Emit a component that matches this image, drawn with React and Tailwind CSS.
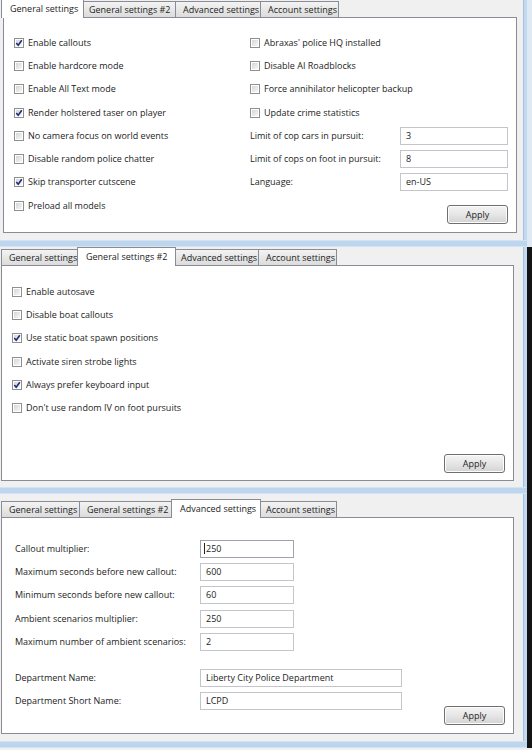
import React from "react";

const TABS = [
  { label: "General settings", w: "w-[79px]", wActive: "w-[83px]" },
  { label: "General settings #2", w: "w-[95px]", wActive: "w-[99px]" },
  { label: "Advanced settings", w: "w-[86px]", wActive: "w-[90px]" },
  { label: "Account settings", w: "w-[79px]", wActive: "w-[83px]" },
];

const TabStrip = ({ active }) => (
  <div className="flex items-end h-[17px]">
    {TABS.map((tab, i) => {
      const first = i === 0;
      if (i === active) {
        return (
          <div
            key={tab.label}
            className={`relative z-10 h-[19px] -mb-px bg-white border-x border-t border-[#898c95] flex items-center pl-[8px] overflow-hidden whitespace-nowrap ${tab.wActive} ${
              first ? "ml-[-2px]" : "ml-[-3px]"
            } mr-[-2px]`}
          >
            {tab.label}
          </div>
        );
      }
      return (
        <div
          key={tab.label}
          className={`h-[16px] bg-linear-to-b from-[#f3f3f3] to-[#dcdcdc] border-x border-t border-[#898c95] flex items-center pl-[7px] overflow-hidden whitespace-nowrap ${tab.w} ${
            first ? "" : "-ml-px"
          }`}
        >
          {tab.label}
        </div>
      );
    })}
  </div>
);

const Check = ({ label, checked }) => (
  <div className="h-[23.3px] flex items-center gap-[4px] whitespace-nowrap">
    <span className="relative w-[10px] h-[10px] border border-[#8e8f8f] bg-white shrink-0">
      <span className="absolute inset-[1px] bg-linear-to-br from-[#d6d6d6] to-[#f7f7f7]" />
      {checked && (
        <svg viewBox="0 0 10 10" className="absolute -inset-px w-[10px] h-[10px]">
          <path
            d="M2.3 5.1 L4.2 7.3 L7.8 2.2"
            fill="none"
            stroke="#1f2c7c"
            strokeWidth="1.6"
          />
        </svg>
      )}
    </span>
    <span>{label}</span>
  </div>
);

const Field = ({ value, w, focused }) => (
  <div
    className={`h-[18px] border bg-white flex items-center pl-[5px] ${w} ${
      focused ? "border-[#9fa3ab]" : "border-[#c3c5ca]"
    }`}
  >
    {focused && <span className="w-px h-[11px] bg-[#222] -ml-[2px] mr-[1px]" />}
    {value}
  </div>
);

const ApplyButton = () => (
  <div className="w-[61px] h-[19px] rounded-[3px] border border-[#707070] bg-linear-to-b from-[#f4f4f4] via-[#e6e6e6] to-[#d3d3d3] flex items-center justify-center shadow-[inset_0_0_0_1px_#fcfcfc]">
    Apply
  </div>
);

const Frame = ({ edge, children }) => (
  <div className="flex">
    <div className="flex-1 flex flex-col">
      <div className="flex">
        <div className="flex-1 bg-[#f0f0f0]">{children}</div>
        <div className="w-[4px] bg-[#c3d9ef] border-l border-[#a3c2e2]" />
      </div>
      <div className="h-[7px] bg-[#bdd5ed] border-t border-[#d2e3f4] border-b border-[#7ba4d1]" />
    </div>
    <div className={`w-[5px] ${edge}`} />
  </div>
);

const GeneralPanel = () => (
  <Frame edge="bg-[#dfe9f4]">
    <div className="h-[240px] pl-[3px]">
      <TabStrip active={0} />
      <div className="w-[514px] h-[216px] border border-[#898c95] bg-white flex">
        <div className="w-[246px] pl-[10px] pt-[13px]">
          <Check label="Enable callouts" checked />
          <Check label="Enable hardcore mode" />
          <Check label="Enable All Text mode" />
          <Check label="Render holstered taser on player" checked />
          <Check label="No camera focus on world events" />
          <Check label="Disable random police chatter" />
          <Check label="Skip transporter cutscene" checked />
          <Check label="Preload all models" />
        </div>
        <div className="flex-1 flex flex-col pt-[13px] pr-[8px] pb-[8px]">
          <Check label="Abraxas' police HQ installed" />
          <Check label="Disable AI Roadblocks" />
          <Check label="Force annihilator helicopter backup" />
          <Check label="Update crime statistics" />
          {[
            ["Limit of cop cars in pursuit:", "3"],
            ["Limit of cops on foot in pursuit:", "8"],
            ["Language:", "en-US"],
          ].map(([label, value]) => (
            <div key={label} className="h-[23.3px] flex items-center">
              <span className="w-[150px]">{label}</span>
              <Field value={value} w="flex-1" />
            </div>
          ))}
          <div className="mt-auto flex justify-end">
            <ApplyButton />
          </div>
        </div>
      </div>
    </div>
  </Frame>
);

const GeneralTwoPanel = () => (
  <Frame edge="bg-[#141414]">
    <div className="h-[240px] pl-[1px] pt-[1px]">
      <TabStrip active={1} />
      <div className="w-[513px] h-[216px] border border-[#898c95] bg-white flex">
        <div className="pl-[10px] pt-[14px]">
          <Check label="Enable autosave" />
          <Check label="Disable boat callouts" />
          <Check label="Use static boat spawn positions" checked />
          <Check label="Activate siren strobe lights" />
          <Check label="Always prefer keyboard input" checked />
          <Check label="Don't use random IV on foot pursuits" />
        </div>
        <div className="flex-1 flex items-end justify-end pr-[8px] pb-[7px]">
          <ApplyButton />
        </div>
      </div>
    </div>
  </Frame>
);

const AdvancedPanel = () => (
  <Frame edge="bg-[#141414]">
    <div className="h-[247px] pl-[1px] pt-[6px]">
      <TabStrip active={2} />
      <div className="w-[513px] h-[217px] border border-[#898c95] bg-white flex">
        <div className="pl-[13px] pt-[19px]">
          {[
            ["Callout multiplier:", "250", true],
            ["Maximum seconds before new callout:", "600"],
            ["Minimum seconds before new callout:", "60"],
            ["Ambient scenarios multiplier:", "250"],
            ["Maximum number of ambient scenarios:", "2"],
          ].map(([label, value, focused]) => (
            <div key={label} className="h-[23.3px] flex items-center">
              <span className="w-[185px] whitespace-nowrap">{label}</span>
              <Field value={value} w="w-[94px]" focused={focused} />
            </div>
          ))}
          <div className="mt-[12.5px]">
            {[
              ["Department Name:", "Liberty City Police Department"],
              ["Department Short Name:", "LCPD"],
            ].map(([label, value]) => (
              <div key={label} className="h-[23.3px] flex items-center">
                <span className="w-[185px] whitespace-nowrap">{label}</span>
                <Field value={value} w="w-[202px]" />
              </div>
            ))}
          </div>
        </div>
        <div className="flex-1 flex items-end justify-end pr-[8px] pb-[8px]">
          <ApplyButton />
        </div>
      </div>
    </div>
  </Frame>
);

export default function App() {
  return (
    <div className="w-[532px] h-[750px] overflow-hidden bg-[#f0f0f0] text-[9px] leading-[12px] text-[#1c1c1c] font-['Open_Sans',sans-serif]">
      <GeneralPanel />
      <GeneralTwoPanel />
      <AdvancedPanel />
    </div>
  );
}
